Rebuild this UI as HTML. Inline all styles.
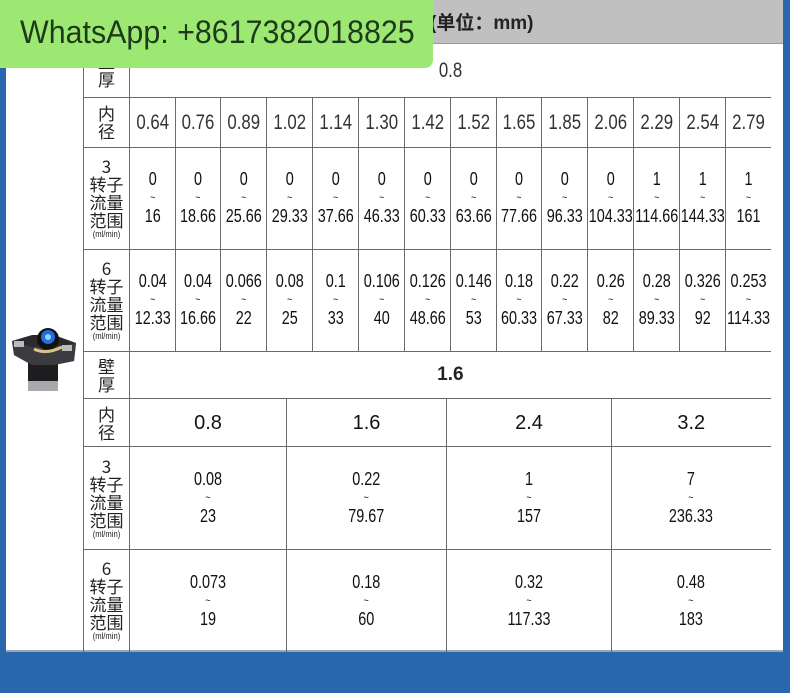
<!DOCTYPE html>
<html><head><meta charset="utf-8">
<style>
*{margin:0;padding:0;box-sizing:border-box}
body{width:790px;height:693px;background:#2a67ae;position:relative;overflow:hidden;font-family:"Liberation Sans","Noto Sans CJK SC",sans-serif;color:#222}
#panel{position:absolute;left:6px;top:0;width:777px;height:652px;background:#fff;border-bottom:2px solid #9aa7b8}
#hdr{position:absolute;left:6px;top:0;width:777px;height:44px;background:#c0c0c0;border-bottom:1px solid #999}
#hdr span{position:absolute;left:424px;top:8px;font:bold 19px "Liberation Sans","Noto Sans CJK SC",sans-serif;color:#222}
table{position:absolute;left:83px;border-collapse:collapse;table-layout:fixed}
td{border:1px solid #6a6a6a;text-align:center;vertical-align:middle;padding:0;line-height:1}
tr>td:last-child{border-right:none}
.lab{font-family:"Noto Sans CJK SC",sans-serif;font-size:17px;line-height:18px;color:#222}
.lab small{font-size:9px;display:block;line-height:11px;font-family:"Liberation Sans",sans-serif;transform:scaleX(.85)}
.c{width:150%;margin-left:-25%;transform:scaleX(.8);text-align:center;white-space:nowrap}
.big{font-size:21px;color:#333}
.v{font-size:18px;line-height:19px;color:#111}
.t{font-size:11px;display:block;line-height:18px}
.b{font-size:19px;font-weight:bold}
.h{font-size:20px;color:#111}
#wa{position:absolute;left:0;top:0;width:433px;height:68px;background:#9ce872;border-radius:0 0 8px 0;color:#1d3a1a}
#wa span{position:absolute;left:20px;top:14px;font:32px "Liberation Sans",sans-serif;transform:scaleX(.95);transform-origin:left top;white-space:nowrap}
</style></head><body>
<div id="panel"></div>
<div id="hdr"><span>(单位：mm)</span></div>

<table style="top:44px;width:687px">
<colgroup><col style="width:46px"><col style="width:46px"><col style="width:45px"><col style="width:46px"><col style="width:46px"><col style="width:46px"><col style="width:46px"><col style="width:46px"><col style="width:46px"><col style="width:45px"><col style="width:46px"><col style="width:46px"><col style="width:46px"><col style="width:46px"><col style="width:45px"></colgroup>
<tr style="height:53px"><td class="lab" style="border-top:none">壁<br>厚</td><td colspan="14" class="big" style="border-top:none"><div class="c">0.8</div></td></tr>
<tr style="height:50px"><td class="lab">内<br>径</td><td class="big"><div class="c">0.64</div></td><td class="big"><div class="c">0.76</div></td><td class="big"><div class="c">0.89</div></td><td class="big"><div class="c">1.02</div></td><td class="big"><div class="c">1.14</div></td><td class="big"><div class="c">1.30</div></td><td class="big"><div class="c">1.42</div></td><td class="big"><div class="c">1.52</div></td><td class="big"><div class="c">1.65</div></td><td class="big"><div class="c">1.85</div></td><td class="big"><div class="c">2.06</div></td><td class="big"><div class="c">2.29</div></td><td class="big"><div class="c">2.54</div></td><td class="big"><div class="c">2.79</div></td></tr>
<tr style="height:102px"><td class="lab">3<br>转子<br>流量<br>范围<small>(ml/min)</small></td>
<td class="v"><div class="c">0<span class="t">~</span>16</div></td><td class="v"><div class="c">0<span class="t">~</span>18.66</div></td><td class="v"><div class="c">0<span class="t">~</span>25.66</div></td><td class="v"><div class="c">0<span class="t">~</span>29.33</div></td><td class="v"><div class="c">0<span class="t">~</span>37.66</div></td><td class="v"><div class="c">0<span class="t">~</span>46.33</div></td><td class="v"><div class="c">0<span class="t">~</span>60.33</div></td><td class="v"><div class="c">0<span class="t">~</span>63.66</div></td><td class="v"><div class="c">0<span class="t">~</span>77.66</div></td><td class="v"><div class="c">0<span class="t">~</span>96.33</div></td><td class="v"><div class="c">0<span class="t">~</span>104.33</div></td><td class="v"><div class="c">1<span class="t">~</span>114.66</div></td><td class="v"><div class="c">1<span class="t">~</span>144.33</div></td><td class="v"><div class="c">1<span class="t">~</span>161</div></td></tr>
<tr style="height:102px"><td class="lab">6<br>转子<br>流量<br>范围<small>(ml/min)</small></td>
<td class="v"><div class="c">0.04<span class="t">~</span>12.33</div></td><td class="v"><div class="c">0.04<span class="t">~</span>16.66</div></td><td class="v"><div class="c">0.066<span class="t">~</span>22</div></td><td class="v"><div class="c">0.08<span class="t">~</span>25</div></td><td class="v"><div class="c">0.1<span class="t">~</span>33</div></td><td class="v"><div class="c">0.106<span class="t">~</span>40</div></td><td class="v"><div class="c">0.126<span class="t">~</span>48.66</div></td><td class="v"><div class="c">0.146<span class="t">~</span>53</div></td><td class="v"><div class="c">0.18<span class="t">~</span>60.33</div></td><td class="v"><div class="c">0.22<span class="t">~</span>67.33</div></td><td class="v"><div class="c">0.26<span class="t">~</span>82</div></td><td class="v"><div class="c">0.28<span class="t">~</span>89.33</div></td><td class="v"><div class="c">0.326<span class="t">~</span>92</div></td><td class="v"><div class="c">0.253<span class="t">~</span>114.33</div></td></tr>
<tr style="height:47px"><td class="lab">壁<br>厚</td><td colspan="14" class="b">1.6</td></tr>
</table>

<table style="top:398px;width:687px">
<colgroup><col style="width:46px"><col style="width:157px"><col style="width:160px"><col style="width:165px"><col style="width:159px"></colgroup>
<tr style="height:48px"><td class="lab">内<br>径</td><td class="h">0.8</td><td class="h">1.6</td><td class="h">2.4</td><td class="h">3.2</td></tr>
<tr style="height:103px"><td class="lab">3<br>转子<br>流量<br>范围<small>(ml/min)</small></td><td class="v"><div class="c">0.08<span class="t">~</span>23</div></td><td class="v"><div class="c">0.22<span class="t">~</span>79.67</div></td><td class="v"><div class="c">1<span class="t">~</span>157</div></td><td class="v"><div class="c">7<span class="t">~</span>236.33</div></td></tr>
<tr style="height:102px"><td class="lab" style="border-bottom:none">6<br>转子<br>流量<br>范围<small>(ml/min)</small></td><td class="v" style="border-bottom:none"><div class="c">0.073<span class="t">~</span>19</div></td><td class="v" style="border-bottom:none"><div class="c">0.18<span class="t">~</span>60</div></td><td class="v" style="border-bottom:none"><div class="c">0.32<span class="t">~</span>117.33</div></td><td class="v" style="border-bottom:none"><div class="c">0.48<span class="t">~</span>183</div></td></tr>
</table>

<svg style="position:absolute;left:10px;top:325px" width="70" height="72" viewBox="0 0 70 72">
<rect x="18" y="30" width="30" height="30" fill="#1d1d1f"/>
<rect x="18" y="56" width="30" height="10" fill="#a9a9ad"/>
<polygon points="2,16 22,10 44,10 66,18 64,36 44,40 22,40 4,30" fill="#2a2a2d"/>
<polygon points="2,16 22,22 44,22 66,18 64,36 44,40 22,40 4,30" fill="#3c3c40"/>
<rect x="4" y="16" width="10" height="6" fill="#bbb"/>
<rect x="52" y="20" width="10" height="6" fill="#bbb"/>
<circle cx="38" cy="14" r="11" fill="#111"/>
<circle cx="38" cy="12" r="7" fill="#1f6fe0"/>
<circle cx="38" cy="12" r="3" fill="#9cd0ff"/>
<path d="M24 24 Q36 30 52 22" stroke="#d8c28a" stroke-width="3" fill="none"/>
</svg>

<div id="wa"><span>WhatsApp: +8617382018825</span></div>
</body></html>
